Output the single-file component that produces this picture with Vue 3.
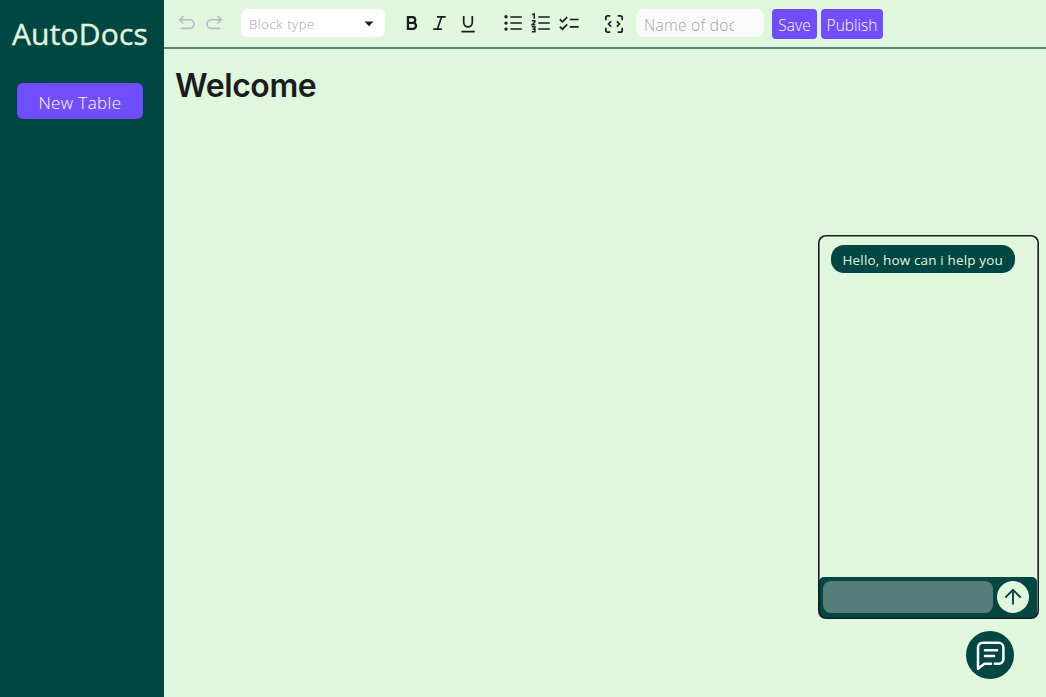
<script setup>
import { ref } from 'vue'

const docName = ref('')
const message = ref('')
const messages = ['Hello, how can i help you']
</script>

<template>
  <div class="app">
    <aside class="sidebar">
      <h1 class="brand">AutoDocs</h1>
      <button class="new-table">New Table</button>
    </aside>

    <main class="main">
      <header class="toolbar">
        <div class="group history">
          <svg width="18" height="18" viewBox="0 0 18 18" class="muted"><path d="M4.9 1.6 1.6 4.8 4.9 8M2 4.8h9.7a4.3 4.3 0 0 1 0 8.6H3.4" /></svg>
          <svg width="18" height="18" viewBox="0 0 18 18" class="muted"><path d="M13.1 1.6 16.4 4.8 13.1 8M16 4.8H6.3a4.3 4.3 0 0 0 0 8.6h8.3" /></svg>
        </div>
        <button class="select">
          <span>Block type</span>
          <svg width="10" height="6" viewBox="0 0 10 6"><path d="M.6.6h8.8L5 5.2z" fill="#1a1c20" /></svg>
        </button>
        <div class="group marks">
          <svg width="20" height="20" viewBox="0 0 20 20" class="ink heavy"><path d="M6 4.1h4.4a2.8 2.8 0 0 1 0 5.7H6zM6 9.8h5a3.05 3.05 0 0 1 0 6.1H6z" /></svg>
          <svg width="20" height="20" viewBox="0 0 20 20" class="ink mid"><path d="M7 3.9h8.7M3.2 16.1h8.7M11.6 4 7.4 16" /></svg>
          <svg width="20" height="20" viewBox="0 0 20 20" class="ink mid"><path d="M5.7 3v6.5a4.3 4.3 0 0 0 8.6 0V3M3.4 18.6h13.4" /></svg>
        </div>
        <div class="group lists">
          <svg width="20" height="20" viewBox="0 0 20 20" class="ink">
            <g fill="#1a1c20" stroke="none"><circle cx="3" cy="3.8" r="1.7" /><circle cx="3" cy="10.1" r="1.7" /><circle cx="3" cy="16.1" r="1.7" /></g>
            <path class="line" d="M7.3 3.9h11.5M7.3 10.1h11.5M7.3 16.1h11.5" />
          </svg>
          <svg width="20" height="20" viewBox="0 0 20 20" class="ink">
            <path d="M1.2 1.6 3.2.8v5M.8 7.7h3v1.5L1 11.8h3.2M.8 13.7h3.1v5H.8M1.5 16.2h2.4" />
            <path class="line" d="M7.3 3.9h11.5M7.3 10.1h11.5M7.3 16.1h11.5" />
          </svg>
          <svg width="20" height="20" viewBox="0 0 20 20" class="ink mid"><path d="m.8 6.3 2.6 2.6 4.8-4.8M.8 13.6l2.6 2.6 4.8-4.8M10.8 6.5h8.8M10.8 13.9h8.8" /></svg>
        </div>
        <svg width="20" height="20" viewBox="0 0 20 20" class="ink code"><path d="M1.8 6.2V3.6a1.8 1.8 0 0 1 1.8-1.8h2.7M13.7 1.8h2.7a1.8 1.8 0 0 1 1.8 1.8v2.6M18.2 13.8v2.6a1.8 1.8 0 0 1-1.8 1.8h-2.7M6.3 18.2H3.6a1.8 1.8 0 0 1-1.8-1.8v-2.6M7.2 7.3 4.5 10l2.7 2.7M12.8 7.3l2.7 2.7-2.7 2.7" /></svg>
        <div class="name"><input v-model="docName" placeholder="Name of document" /></div>
        <button class="action save">Save</button>
        <button class="action publish">Publish</button>
      </header>
      <section class="editor"><h2>Welcome</h2></section>
    </main>

    <section class="chat">
      <div class="messages">
        <p v-for="m in messages" :key="m" class="bubble">{{ m }}</p>
      </div>
      <form class="composer" @submit.prevent>
        <input v-model="message" />
        <button class="send"><svg width="20" height="20" viewBox="0 0 20 20"><path d="M10 17.6V3M2.3 10.5 10 2.8l7.7 7.7" /></svg></button>
      </form>
    </section>
    <button class="chat-toggle">
      <svg width="32" height="32" viewBox="0 0 32 32"><path d="M17 24.8H10.5L4 29.8V8.4A4.6 4.6 0 0 1 8.6 3.8h16.2a4.6 4.6 0 0 1 4.6 4.6v11.8a4.6 4.6 0 0 1-4.6 4.6H20.8M11 11.2h12M11 17h9" /></svg>
    </button>
  </div>
</template>

<style>
body { margin: 0; }
</style>

<style scoped>
.app { position: relative; display: flex; height: 697px; overflow: hidden; background: #e0f7dd; font-family: "Open Sans", "Noto Sans", sans-serif; color: #1a1c20; }
* { box-sizing: border-box; }
button, input { border: 0; padding: 0; font: inherit; outline: 0; }
svg { display: block; flex: none; fill: none; }
.sidebar { width: 164px; flex: none; background: #004643; display: flex; flex-direction: column; align-items: center; }
.brand { margin: 12px 0 27px; padding-right: 4px; height: 44px; line-height: 44px; font-size: 30px; font-weight: 500; letter-spacing: .2px; -webkit-text-stroke: .4px #e0f7dd; color: #e0f7dd; white-space: nowrap; }
.new-table { width: 126px; height: 36px; margin-right: 4px; border-radius: 6px; background: #704dff; color: #fff; font-size: 17px; font-weight: 300; letter-spacing: .4px; padding-top: 2px; }
.main { flex: 1; min-width: 0; }
.toolbar { height: 49px; border-bottom: 2px solid #5c8582; display: flex; align-items: center; padding-left: 14px; }
.group { display: flex; }
.history { gap: 9px; width: 63px; }
.muted { stroke: #b9b8c6; stroke-width: 1.6; stroke-linecap: round; stroke-linejoin: round; }
.select { width: 144px; height: 28px; margin-bottom: 1px; background: #fff; border-radius: 6px; display: flex; align-items: center; justify-content: space-between; padding: 1px 11px 0 8px; font-size: 13px; font-weight: 300; letter-spacing: .6px; color: #a3a2b5; }
.marks { gap: 8px; margin: 0 0 1px 17px; }
.ink { stroke: #1a1c20; stroke-width: 1.5; }
.ink.mid { stroke-width: 1.7; }
.ink.heavy { stroke-width: 2.3; }
.line { stroke: #46544c; stroke-width: 2; }
.lists { gap: 8px; margin: 0 0 1px 25px; }
.code { margin-left: 25px; stroke-width: 1.7; }
.name { width: 128px; height: 28px; margin: 0 8px 1px 12px; padding: 0 30px 0 8px; border-radius: 8px; background: #fafafa; }
.name input { display: block; width: 90px; height: 31px; background: none; font-size: 15.5px; font-weight: 300; letter-spacing: .3px; }
.name input::placeholder { color: #9ca3af; opacity: 1; }
.action { height: 30px; margin-top: 1px; padding-top: 2px; border-radius: 4px; background: #704dff; color: #fff; font-size: 15.5px; font-weight: 300; }
.save { width: 45px; }
.publish { width: 62px; margin-left: 4px; }
.editor { padding: 12px; }
.editor h2 { margin: 0 0 0 -1px; font-family: Inter, sans-serif; font-size: 32px; line-height: 49px; font-weight: 600; letter-spacing: -.4px; }
.chat { position: absolute; left: 817.5px; top: 235px; width: 221px; height: 384px; padding: .5px; display: flex; flex-direction: column; }
.chat::after { content: ""; position: absolute; inset: 0; border-radius: 8px; box-shadow: inset 0 0 0 1.6px #1a1c20; pointer-events: none; }
.messages { flex: 1; padding: 9.5px 12.5px; }
.bubble { margin: 0; width: 184px; height: 28px; padding: 2px 0 0 12px; border-radius: 13px; background: #004643; color: #e0f7dd; font-size: 13.5px; line-height: 27px; font-weight: 400; letter-spacing: .15px; white-space: nowrap; }
.composer { height: 41px; margin: 0 1px 1px; display: flex; gap: 4px; padding: 4px 4px; background: #004643; border-radius: 5px; }
.composer input { width: 170px; height: 32px; border-radius: 8px; background: #567d7b; }
.send { width: 32px; height: 32px; border-radius: 50%; background: #e0f7dd; display: grid; place-items: center; }
.send svg { stroke: #004643; stroke-width: 1.9; }
.chat-toggle { position: absolute; left: 966px; top: 631px; width: 48px; height: 48px; border-radius: 50%; background: #004643; display: grid; place-items: center; }
.chat-toggle svg { margin-top: -1px; stroke: #fff; stroke-width: 2.5; stroke-linejoin: round; stroke-linecap: round; }
</style>
